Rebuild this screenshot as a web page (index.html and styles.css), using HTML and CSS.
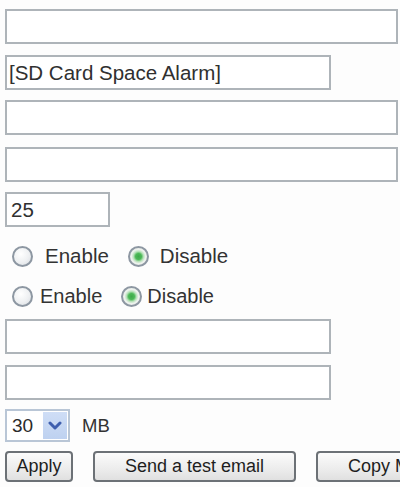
FILE: index.html
```html
<!DOCTYPE html>
<html>
<head>
<meta charset="utf-8">
<link rel="stylesheet" href="styles.css">
</head>
<body>
<form class="form">
  <input class="field wide" type="text" value="">
  <input class="field mid gap11" type="text" value="[SD Card Space Alarm]">
  <input class="field wide gap10" type="text" value="">
  <input class="field wide gap12" type="text" value="">
  <input class="field short gap10" type="text" value="25">
  <div class="radios row1">
    <label class="opt"><input type="radio" name="r1" class="radio"><span>Enable</span></label>
    <label class="opt"><input type="radio" name="r1" class="radio" checked><span>Disable</span></label>
  </div>
  <div class="radios row2">
    <label class="opt"><input type="radio" name="r2" class="radio"><span>Enable</span></label>
    <label class="opt"><input type="radio" name="r2" class="radio" checked><span>Disable</span></label>
  </div>
  <input class="field mid gap11" type="text" value="">
  <input class="field mid gap11" type="text" value="">
  <div class="sizeRow">
    <div class="selectBox">
      <select class="select"><option>30</option></select>
      <span class="arrow"><svg width="14" height="10" viewBox="0 0 14 10"><path d="M2 2 L7 7 L12 2" fill="none" stroke="#3f5fae" stroke-width="3" stroke-linecap="round" stroke-linejoin="round"/></svg></span>
    </div>
    <span class="unit">MB</span>
  </div>
  <div class="buttons">
    <button type="button" class="btn apply">Apply</button>
    <button type="button" class="btn big">Send a test email</button>
    <button type="button" class="btn big">Copy Mail Settings</button>
  </div>
</form>
</body>
</html>
```

FILE: styles.css
```css
html, body {
  margin: 0;
  padding: 0;
  background: #fdfdfd;
  overflow: hidden;
}
body {
  width: 400px;
  height: 487px;
  font-family: "Liberation Sans", Arial, sans-serif;
  color: #2e2e2e;
}
.form {
  display: flex;
  flex-direction: column;
  align-items: flex-start;
  padding: 9px 0 0 5px;
  margin: 0;
}
.field {
  box-sizing: border-box;
  height: 35px;
  margin: 0;
  border: 2px solid #aeb4b9;
  background: #fff;
  font-family: "Liberation Sans", Arial, sans-serif;
  font-size: 20.5px;
  color: #303030;
  padding: 0 0 0 2px;
  outline: none;
}
.wide { width: 393px; }
.mid { width: 326px; }
.short { width: 105px; padding-left: 4px; }
.gap10 { margin-top: 10px; }
.gap11 { margin-top: 11px; }
.gap12 { margin-top: 12px; }

.radios {
  display: flex;
  align-items: center;
  height: 24px;
  font-size: 20.5px;
  color: #333;
}
.row1 { margin-top: 17px; padding-left: 7px; gap: 19px; }
.row1 .opt { gap: 12px; }
.row1 .opt:last-child { gap: 11px; }
.row2 { margin-top: 16px; padding-left: 7px; gap: 19px; font-size: 20px; }
.row2 .opt { gap: 7px; }
.row2 .opt:last-child { gap: 5px; }
.opt {
  display: flex;
  align-items: center;
}
.radio {
  appearance: none;
  -webkit-appearance: none;
  box-sizing: border-box;
  width: 21px;
  height: 21px;
  margin: 0;
  border-radius: 50%;
  border: 2px solid #8d97a2;
  background: radial-gradient(circle at 40% 35%, #ffffff 0%, #eef0f2 55%, #d5dade 100%);
}
.radio:checked {
  background: radial-gradient(circle, #3fa84a 0, #4cb957 3px, #b6e1b8 5px, #eef2ee 7px, #dfe4e0 100%);
}

.sizeRow {
  margin-top: 9px;
  display: flex;
  align-items: center;
  gap: 12px;
  height: 33px;
}
.selectBox {
  position: relative;
  box-sizing: border-box;
  width: 65px;
  height: 33px;
  border: 2px solid #b9c6d6;
  background: #fff;
}
.select {
  appearance: none;
  -webkit-appearance: none;
  border: none;
  background: transparent;
  width: 100%;
  height: 100%;
  margin: 0;
  padding: 0 0 0 5px;
  font-family: "Liberation Sans", Arial, sans-serif;
  font-size: 19px;
  color: #2a2a2a;
  outline: none;
}
.arrow {
  position: absolute;
  top: 1px;
  right: 1px;
  width: 24px;
  height: 27px;
  background: linear-gradient(#cfdef6, #bed1f0);
  display: flex;
  align-items: center;
  justify-content: center;
  pointer-events: none;
}
.unit {
  font-size: 18.5px;
  color: #333;
}

.buttons {
  margin-top: 9px;
  display: flex;
  gap: 20px;
  white-space: nowrap;
}
.btn {
  box-sizing: border-box;
  height: 31px;
  margin: 0;
  border: 2px solid #6c7176;
  border-radius: 4px;
  background: linear-gradient(#fbfbfb, #ececec 60%, #e0e0e0);
  font-family: "Liberation Sans", Arial, sans-serif;
  font-size: 18px;
  color: #1e1e1e;
  padding: 0;
  flex: none;
}
.apply { width: 68px; }
.big { width: 203px; padding: 0 30px; text-align: left; }
.big:nth-child(2) { text-align: center; padding: 0; }
```
